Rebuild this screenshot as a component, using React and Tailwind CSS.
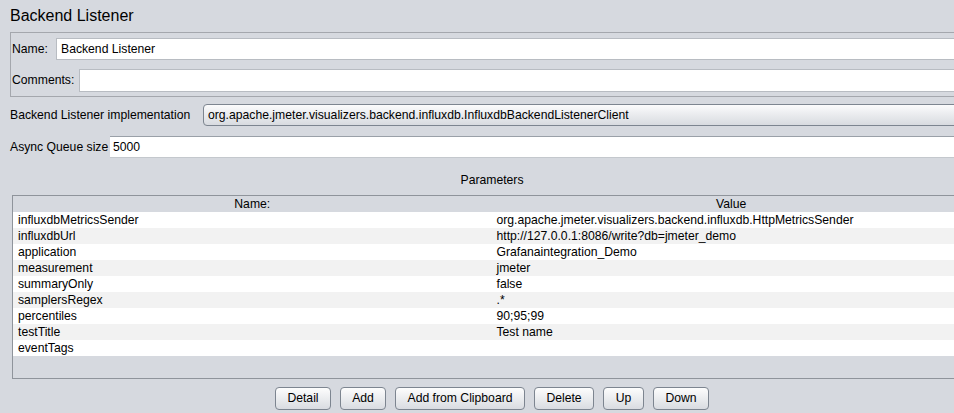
import React from 'react';

const params = [
    ['influxdbMetricsSender', 'org.apache.jmeter.visualizers.backend.influxdb.HttpMetricsSender'],
    ['influxdbUrl', 'http://127.0.0.1:8086/write?db=jmeter_demo'],
    ['application', 'Grafanaintegration_Demo'],
    ['measurement', 'jmeter'],
    ['summaryOnly', 'false'],
    ['samplersRegex', '.*'],
    ['percentiles', '90;95;99'],
    ['testTitle', 'Test name'],
    ['eventTags', ''],
];

const buttons = [
    ['Detail', 'w-[56px]'],
    ['Add', 'w-[46px]'],
    ['Add from Clipboard', 'w-[130px]'],
    ['Delete', 'w-[60px]'],
    ['Up', 'w-[41px]'],
    ['Down', 'w-[56px]'],
];

const App = () => {
    return (
        <div className="w-[954px] h-[413px] overflow-hidden bg-[#d6d9df] text-[12.2px] text-black font-['Liberation_Sans',Arial,sans-serif]">
            <div className="w-[980px]">
                {/* title */}
                <div className="pl-[10px] pt-[6px] h-[32px] text-[16px] leading-[20px]">Backend Listener</div>

                {/* name / comments */}
                <div className="ml-[10px] h-[65px] border border-[#a4a7ad] flex flex-col pt-[5px] gap-[9px]">
                    <div className="flex items-center h-[22px]">
                        <span className="w-[45px] pl-[1px]">Name:</span>
                        <div className="flex-1 h-[22px] bg-white border border-[#b8bcc2] flex items-center pl-[4px]">Backend Listener</div>
                    </div>
                    <div className="flex items-center h-[23px]">
                        <span className="w-[68px] pl-[1px]">Comments:</span>
                        <div className="flex-1 h-[23px] bg-white border border-[#b8bcc2]"></div>
                    </div>
                </div>

                {/* implementation */}
                <div className="flex items-center pl-[10px] mt-[7px] h-[22px]">
                    <span className="w-[193px] whitespace-nowrap">Backend Listener implementation</span>
                    <div className="flex-1 h-[22px] rounded-[4px] border border-[#7d8590] bg-gradient-to-b from-[#fbfbfc] to-[#d8dbe0] flex items-center pl-[4px] whitespace-nowrap">
                        org.apache.jmeter.visualizers.backend.influxdb.InfluxdbBackendListenerClient
                    </div>
                </div>

                {/* async queue */}
                <div className="flex items-center pl-[10px] mt-[10px] h-[22px]">
                    <span className="w-[100px] whitespace-nowrap">Async Queue size</span>
                    <div className="flex-1 h-[22px] bg-white border-t border-t-[#9aa0a8] border-b border-b-[#c4c8cd] flex items-center pl-[3px]">5000</div>
                </div>

                {/* parameters */}
                <div className="ml-[12px] w-[960px] text-center mt-[14px] h-[23px] leading-[17px]">Parameters</div>

                <div className="ml-[12px] w-[960px] h-[184px] border border-[#8f949b] flex flex-col">
                    <div className="flex h-[16px] leading-[16px]">
                        <div className="w-[479px] text-center">Name:</div>
                        <div className="w-[480px] text-center">Value</div>
                    </div>
                    {params.map(([name, value], i) => (
                        <div
                            key={name}
                            className={`flex h-[16px] leading-[16px] ${i % 2 === 0 ? 'bg-white' : 'bg-[#f2f2f2]'}`}
                        >
                            <div className="w-[479px] pl-[5px] whitespace-nowrap">{name}</div>
                            <div className="w-[480px] pl-[5px] whitespace-nowrap">{value}</div>
                        </div>
                    ))}
                </div>

                {/* buttons */}
                <div className="ml-[12px] w-[960px] flex justify-center gap-[9px] mt-[8px]">
                    {buttons.map(([label, w]) => (
                        <button
                            key={label}
                            className={`${w} h-[23px] rounded-[4px] border border-[#7d8590] bg-gradient-to-b from-[#fdfdfd] to-[#d9dce1] text-[12.2px]`}
                        >
                            {label}
                        </button>
                    ))}
                </div>
            </div>
        </div>
    );
};

export default App;
